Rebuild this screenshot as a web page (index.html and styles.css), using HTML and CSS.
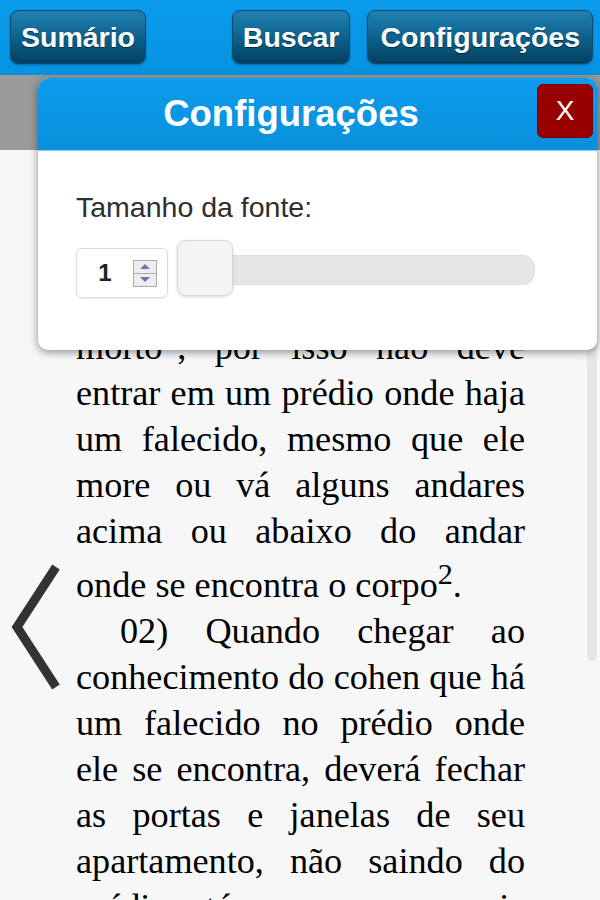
FILE: index.html
```html
<!DOCTYPE html>
<html lang="pt-BR">
<head>
    <meta charset="UTF-8">
    <meta name="viewport" content="width=device-width, initial-scale=1.0">
    <title>Leitor</title>
    <link rel="stylesheet" href="styles.css">
</head>
<body>
    <header class="topbar">
        <button class="nav-btn">Sumário</button>
        <div class="topbar-right">
            <button class="nav-btn">Buscar</button>
            <button class="nav-btn wide">Configurações</button>
        </div>
    </header>
    <div class="subbar"></div>

    <main class="reader">
        <article class="page-text">
            <p>01) O cohen não pode permanecer sob o mesmo teto em que se encontra um</p>
            <p class="cont">morto", por isso não deve entrar em um prédio onde haja um falecido, mesmo que ele more ou vá alguns andares acima ou abaixo do andar onde se encontra o corpo<sup>2</sup>.</p>
            <p>02) Quando chegar ao conhecimento do cohen que há um falecido no prédio onde ele se encontra, deverá fechar as portas e janelas de seu apartamento, não saindo do prédio até que o corpo seja retirado.</p>
        </article>

        <!-- previous page arrow -->
        <a class="prev-page" href="#">
            <svg width="52" height="132" viewBox="0 0 52 132">
                <polyline points="46,4 7,64 46,124" fill="none" stroke="#333" stroke-width="9"/>
            </svg>
        </a>
        <div class="scroll-thumb"></div>
    </main>

    <div class="dialog">
        <div class="dialog-head">
            <h2>Configurações</h2>
            <button class="close-btn">X</button>
        </div>
        <div class="dialog-body">
            <label class="field-label">Tamanho da fonte:</label>
            <div class="font-row">
                <div class="num-box">
                    <span class="num-value">1</span>
                    <div class="spinner">
                        <span class="spin-up"></span>
                        <span class="spin-down"></span>
                    </div>
                </div>
                <div class="slider">
                    <div class="slider-track"></div>
                    <div class="slider-thumb"></div>
                </div>
            </div>
        </div>
    </div>
</body>
</html>
```

FILE: styles.css
```css
body {
    margin: 0;
    height: 900px;
    overflow: hidden;
    background-color: #f7f7f7;
    font-family: 'Liberation Sans', Arial, sans-serif;
    position: relative;
}
.topbar {
    height: 75px;
    box-sizing: border-box;
    padding: 10px 7px 0 10px;
    display: flex;
    align-items: flex-start;
    justify-content: space-between;
    background: linear-gradient(#0a9bec, #0893e2);
}
.topbar-right {
    display: flex;
    gap: 17px;
}
.nav-btn {
    height: 54px;
    padding: 0 10px;
    font-family: 'Liberation Sans', Arial, sans-serif;
    font-size: 28.5px;
    font-weight: bold;
    color: #fff;
    text-shadow: 0 1px 1px rgba(0, 0, 0, 0.5);
    background: linear-gradient(#2181b0, #0c5f8a 55%, #03405f);
    border: 1px solid #064a6d;
    border-radius: 8px;
    box-shadow: 0 1px 2px rgba(0, 0, 0, 0.3);
}
.nav-btn.wide {
    padding: 0 12px;
}
.subbar {
    height: 75px;
    background-color: #9b9b9b;
}
.reader {
    position: relative;
    padding: 36px 0 0 76px;
}
.page-text {
    width: 449px;
    font-family: 'Liberation Serif', 'Times New Roman', serif;
    font-size: 36.2px;
    line-height: 46px;
    color: #000;
}
.page-text p {
    margin: 0;
    text-align: justify;
    text-indent: 44px;
}
.page-text p.cont {
    text-indent: 0;
}
.page-text sup {
    line-height: 40px;
}
.prev-page {
    position: absolute;
    left: 10px;
    top: 413px;
}
.scroll-thumb {
    position: absolute;
    left: 587px;
    top: 0;
    width: 10px;
    height: 511px;
    border-radius: 5px;
    background-color: #e6e6e6;
}

/* settings dialog */
.dialog {
    position: absolute;
    top: 78px;
    left: 38px;
    width: 559px;
    background: #fff;
    border-radius: 12px 10px 10px 10px;
    box-shadow: 0 2px 8px rgba(0, 0, 0, 0.45);
    overflow: hidden;
}
.dialog-head {
    height: 72px;
    display: flex;
    align-items: flex-start;
    background: linear-gradient(#0b9cec, #0a8fdc);
    border-bottom: 1px solid #86ccf2;
}
.dialog-head h2 {
    flex: 1;
    margin: 0;
    padding-left: 7px;
    text-align: center;
    font-size: 36.5px;
    line-height: 72px;
    color: #fff;
}
.close-btn {
    width: 56px;
    height: 54px;
    margin: 6px 4px 0 0;
    font-family: 'Liberation Sans', Arial, sans-serif;
    font-size: 28px;
    color: #fff;
    background-color: #990000;
    border: 1px solid #7d0000;
    border-radius: 6px;
}
.dialog-body {
    padding: 40px 0 52px 38px;
}
.field-label {
    display: block;
    font-size: 28.5px;
    line-height: 32px;
    color: #2e2e2e;
}
.font-row {
    display: flex;
    gap: 9px;
    margin-top: 17px;
}
.num-box {
    width: 92px;
    height: 50px;
    margin-top: 8px;
    box-sizing: border-box;
    display: flex;
    align-items: center;
    border: 1px solid #dcdcdc;
    border-radius: 6px;
    box-shadow: 0 1px 2px rgba(0, 0, 0, 0.08);
}
.num-value {
    width: 56px;
    text-align: center;
    font-size: 24px;
    font-weight: bold;
    color: #222;
}
.spinner {
    display: flex;
    flex-direction: column;
    width: 24px;
    height: 27px;
    border: 1px solid #aaa;
    box-sizing: border-box;
    background-color: #eee;
}
.spinner span {
    flex: 1;
    display: flex;
    align-items: center;
    justify-content: center;
}
.spin-up {
    border-bottom: 1px solid #aaa;
}
.spin-up::after {
    content: '';
    border: 5px solid transparent;
    border-top: 0;
    border-bottom: 5px solid #6877b5;
}
.spin-down::after {
    content: '';
    border: 5px solid transparent;
    border-bottom: 0;
    border-top: 5px solid #6877b5;
}
.slider {
    position: relative;
    width: 358px;
    height: 56px;
}
.slider-track {
    margin-top: 15px;
    height: 30px;
    box-sizing: border-box;
    border: 1px solid #dedede;
    border-radius: 12px;
    background-color: #e6e6e6;
}
.slider-thumb {
    position: absolute;
    left: 0;
    top: 0;
    width: 56px;
    height: 56px;
    box-sizing: border-box;
    border: 1px solid #d8d8d8;
    border-radius: 9px;
    background-color: #f4f4f4;
    box-shadow: 0 1px 3px rgba(0, 0, 0, 0.15);
}
```
